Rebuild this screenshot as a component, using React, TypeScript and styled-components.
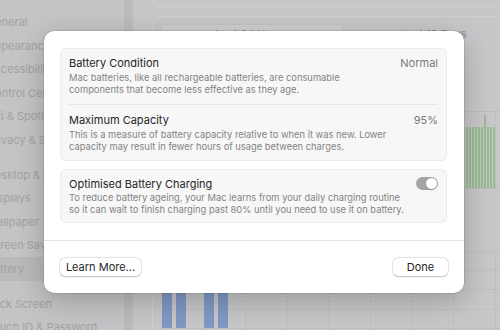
import React from 'react';
import styled, { createGlobalStyle } from 'styled-components';

const GlobalStyle = createGlobalStyle`
  html, body {
    margin: 0;
    padding: 0;
    background: #c6c5c7;
  }
  body {
    font-family: Inter, 'Noto Sans', 'Liberation Sans', sans-serif;
    -webkit-font-smoothing: antialiased;
  }
`;

const Screen = styled.div`
  display: flex;
  height: 330px;
  overflow: hidden;
  position: relative;
  width: 500px;
`;

const Sidebar = styled.nav`
  background-color: #c4c3c5;
  box-sizing: border-box;
  display: flex;
  flex-direction: column;
  flex: 0 0 124px;
  padding-top: 10.5px;
`;

const SidebarGroup = styled.div`
  display: flex;
  flex-direction: column;
  margin-bottom: 11.5px;
`;

const SidebarItem = styled.div<{ $selected?: boolean }>`
  align-items: center;
  background-color: ${(p) => (p.$selected ? '#bab9bb' : 'transparent')};
  border-radius: 0 5px 5px 0;
  color: #a3a2a4;
  display: flex;
  font-size: 11px;
  height: 23.5px;
  white-space: nowrap;

  span {
    margin-left: -13px;
  }
`;

const Divider = styled.div`
  background-color: #bbbabc;
  flex: 0 0 9px;
`;

const Main = styled.main`
  background-color: #c7c6c8;
  box-sizing: border-box;
  display: flex;
  flex: 1;
  flex-direction: column;
  min-width: 0;
  padding-left: 19px;
`;

const TopCard = styled.div`
  border: 1px solid #cfced0;
  border-radius: 6px;
  flex: 0 0 30px;
  margin-top: -25px;
  width: 420px;
`;

const ChartCard = styled.section`
  border: 1px solid #cfced0;
  border-radius: 6px;
  box-sizing: border-box;
  margin-top: 9px;
  padding: 8px;
  width: 420px;
`;

const Segmented = styled.div`
  display: flex;
  height: 18px;
  width: 364px;
`;

const Segment = styled.div<{ $active?: boolean }>`
  align-items: center;
  background-color: ${(p) => (p.$active ? '#cecdcf' : 'transparent')};
  border-radius: 5px;
  box-shadow: ${(p) => (p.$active ? '0 0 0 0.5px #bdbcbe' : 'none')};
  color: #8c8b8d;
  display: flex;
  flex: 1;
  font-size: 11px;
  justify-content: center;
`;

const ChartSvg = styled.svg`
  display: block;
  margin-top: 9px;
`;

const Modal = styled.div`
  background-color: #ffffff;
  border-radius: 10px;
  box-shadow: 0 0 0 0.5px rgba(0, 0, 0, 0.18), 0 8px 28px rgba(0, 0, 0, 0.22);
  box-sizing: border-box;
  display: flex;
  flex-direction: column;
  height: 262px;
  left: 44px;
  position: absolute;
  top: 31px;
  width: 420px;
`;

const ModalBody = styled.div`
  display: flex;
  flex-direction: column;
  gap: 8px;
  padding: 17px 17px 0 16px;
`;

const Group = styled.div`
  background-color: #f7f7f7;
  border: 1px solid #ebebeb;
  border-radius: 6px;
  padding: 0 8px;
`;

const Row = styled.div`
  display: flex;
  gap: 8px;
  padding: 7px 0 8px;

  & + & {
    border-top: 1px solid #e6e6e6;
    padding-top: 8px;
  }

  &:last-child {
    padding-bottom: 7px;
  }
`;

const RowText = styled.div`
  display: flex;
  flex: 1;
  flex-direction: column;
`;

const Title = styled.div`
  color: #262626;
  font-size: 11px;
  line-height: 14px;
`;

const Description = styled.div<{ $tight?: boolean }>`
  color: #838383;
  font-size: 9.35px;
  line-height: ${(p) => (p.$tight ? '11.5px' : '12px')};
  margin-top: ${(p) => (p.$tight ? '1px' : '2px')};
  white-space: nowrap;
`;

const Value = styled.div`
  color: #7a7a7a;
  font-size: 11px;
  line-height: 14px;
`;

const Toggle = styled.div`
  background-color: #a3a3a3;
  border-radius: 7px;
  box-sizing: border-box;
  display: flex;
  height: 13px;
  justify-content: flex-end;
  margin-top: 0;
  padding: 1px;
  width: 22px;

  &::after {
    background-color: #ffffff;
    border-radius: 50%;
    box-shadow: 0 0.5px 1px rgba(0, 0, 0, 0.25);
    content: '';
    height: 11px;
    width: 11px;
  }
`;

const Footer = styled.footer`
  align-items: center;
  border-top: 1px solid #e5e5e5;
  display: flex;
  justify-content: space-between;
  margin-top: auto;
  padding: 17px 16px 17px 16px;
`;

const Button = styled.button<{ $width: number }>`
  background-color: #ffffff;
  border: none;
  border-radius: 5px;
  box-shadow: 0 0 0 0.5px rgba(0, 0, 0, 0.16), 0 0.5px 1.5px rgba(0, 0, 0, 0.18);
  color: #262626;
  font-family: inherit;
  font-size: 11px;
  height: 18px;
  padding: 0;
  width: ${(p) => p.$width}px;
`;

const groups: string[][] = [
  ['General', 'Appearance', 'Accessibility', 'Control Centre', 'Siri & Spotlight', 'Privacy & Security'],
  ['Desktop & Dock', 'Displays', 'Wallpaper', 'Screen Saver', 'Battery'],
  ['Lock Screen', 'Touch ID & Password']
];

const gridX = [162, 203.6, 245.2, 286.8, 328.4, 370, 411.6, 453.2, 495];

const Chart = () => {
  const stripes = Array.from({ length: 10 }, (_, i) => 466 + i * 3);
  return (
    <ChartSvg width={360} height={290} viewBox="0 0 360 290">
      <g transform="translate(-161 -50)" fill="none">
        <line x1={162} y1={109.5} x2={520} y2={109.5} stroke="#bdbcbe" />
        <line x1={162} y1={186.5} x2={520} y2={186.5} stroke="#bdbcbe" />
        {[249.5, 268.5, 287.5, 307.5, 326.5].map((y) => (
          <line key={y} x1={162} y1={y} x2={520} y2={y} stroke="#bebdbf" />
        ))}
        {gridX.map((x) => (
          <g key={x} stroke="#b8b7b9" strokeDasharray="2 2">
            <line x1={x + 0.5} y1={110} x2={x + 0.5} y2={186} />
            <line x1={x + 0.5} y1={250} x2={x + 0.5} y2={340} />
          </g>
        ))}
        {stripes.map((x) => (
          <rect key={x} x={x} y={125} width={2} height={61} fill="#97bb92" />
        ))}
        <rect x={484} y={113} width={2} height={73} fill="#97bb92" />
        {[162, 176, 204, 218].map((x) => (
          <rect key={x} x={x} y={260} width={10} height={66} fill="#7f98c4" />
        ))}
      </g>
    </ChartSvg>
  );
};

const App = () => (
  <>
    <GlobalStyle />
    <Screen>
      <Sidebar>
        {groups.map((items, gi) => (
          <SidebarGroup key={gi}>
            {items.map((label) => (
              <SidebarItem key={label} $selected={label === 'Battery'}>
                <span>{label}</span>
              </SidebarItem>
            ))}
          </SidebarGroup>
        ))}
      </Sidebar>
      <Divider />
      <Main>
        <TopCard />
        <ChartCard>
          <Segmented>
            <Segment $active>Last 24 Hours</Segment>
            <Segment>Last 10 Days</Segment>
          </Segmented>
          <Chart />
        </ChartCard>
      </Main>

      <Modal>
        <ModalBody>
          <Group>
            <Row>
              <RowText>
                <Title>Battery Condition</Title>
                <Description>
                  Mac batteries, like all rechargeable batteries, are consumable
                  <br />
                  components that become less effective as they age.
                </Description>
              </RowText>
              <Value>Normal</Value>
            </Row>
            <Row>
              <RowText>
                <Title>Maximum Capacity</Title>
                <Description>
                  This is a measure of battery capacity relative to when it was new. Lower
                  <br />
                  capacity may result in fewer hours of usage between charges.
                </Description>
              </RowText>
              <Value>95%</Value>
            </Row>
          </Group>
          <Group>
            <Row>
              <RowText>
                <Title>Optimised Battery Charging</Title>
                <Description $tight>
                  To reduce battery ageing, your Mac learns from your daily charging routine
                  <br />
                  so it can wait to finish charging past 80% until you need to use it on battery.
                </Description>
              </RowText>
              <Toggle />
            </Row>
          </Group>
        </ModalBody>
        <Footer>
          <Button $width={81}>Learn More...</Button>
          <Button $width={55}>Done</Button>
        </Footer>
      </Modal>
    </Screen>
  </>
);

export default App;
